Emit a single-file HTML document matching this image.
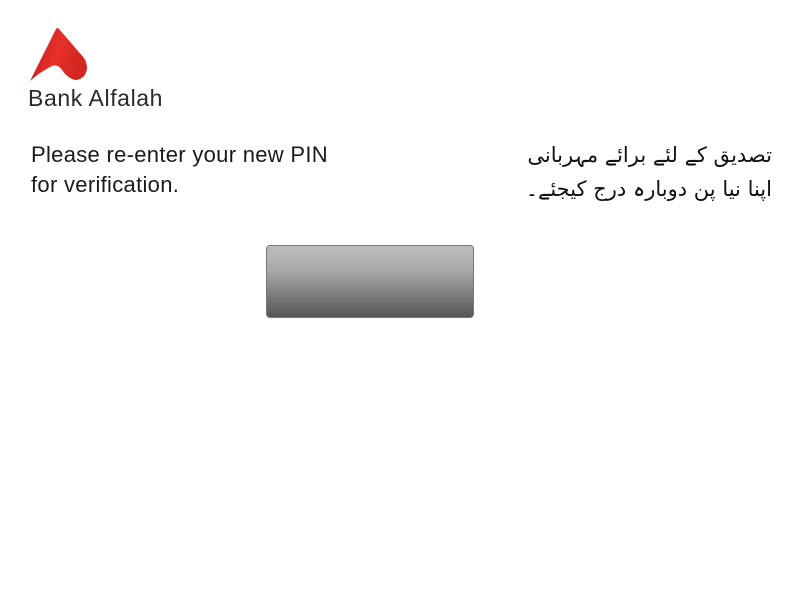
<!DOCTYPE html>
<html><head><meta charset="utf-8"><style>
body{margin:0;width:800px;height:600px;background:#fff;position:relative;overflow:hidden;font-family:"Liberation Sans","DejaVu Sans",sans-serif;color:#222}
.brand{position:absolute;left:28px;top:85px;font-size:23px;color:#2a2a2a;letter-spacing:0.6px}
.en{position:absolute;left:31px;top:140px;font-size:22px;line-height:30px;color:#1a1a1a;letter-spacing:0.3px}
.ur{position:absolute;right:28px;top:138px;font-size:21px;line-height:34px;direction:rtl;text-align:right;font-family:"DejaVu Sans",sans-serif;color:#111}
.btn{position:absolute;left:266px;top:245px;width:206px;height:71px;border:1px solid #777;border-radius:4px;background:linear-gradient(#bdbdbd,#a8a8a8 35%,#555)}
</style></head><body>
<svg style="position:absolute;left:0;top:0" width="120" height="90">
<defs><linearGradient id="g" x1="0" y1="0" x2="1" y2="0.3"><stop offset="0" stop-color="#b5161b"/><stop offset="0.55" stop-color="#e8302a"/><stop offset="1" stop-color="#d0261f"/></linearGradient></defs>
<path d="M30 81 L56 29 Q57 27 59 29 L84 58 Q90 68 84 76 Q78 82 72 79 Q66 76 62 70 Q58 64 52 66 Q40 72 30 81 Z" fill="url(#g)"/>
</svg>
<div class="brand">Bank Alfalah</div>
<div class="en">Please re-enter your new PIN<br>for verification.</div>
<div class="ur">تصدیق کے لئے برائے مہربانی<br>اپنا نیا پن دوبارہ درج کیجئے۔</div>
<div class="btn"></div>
</body></html>
